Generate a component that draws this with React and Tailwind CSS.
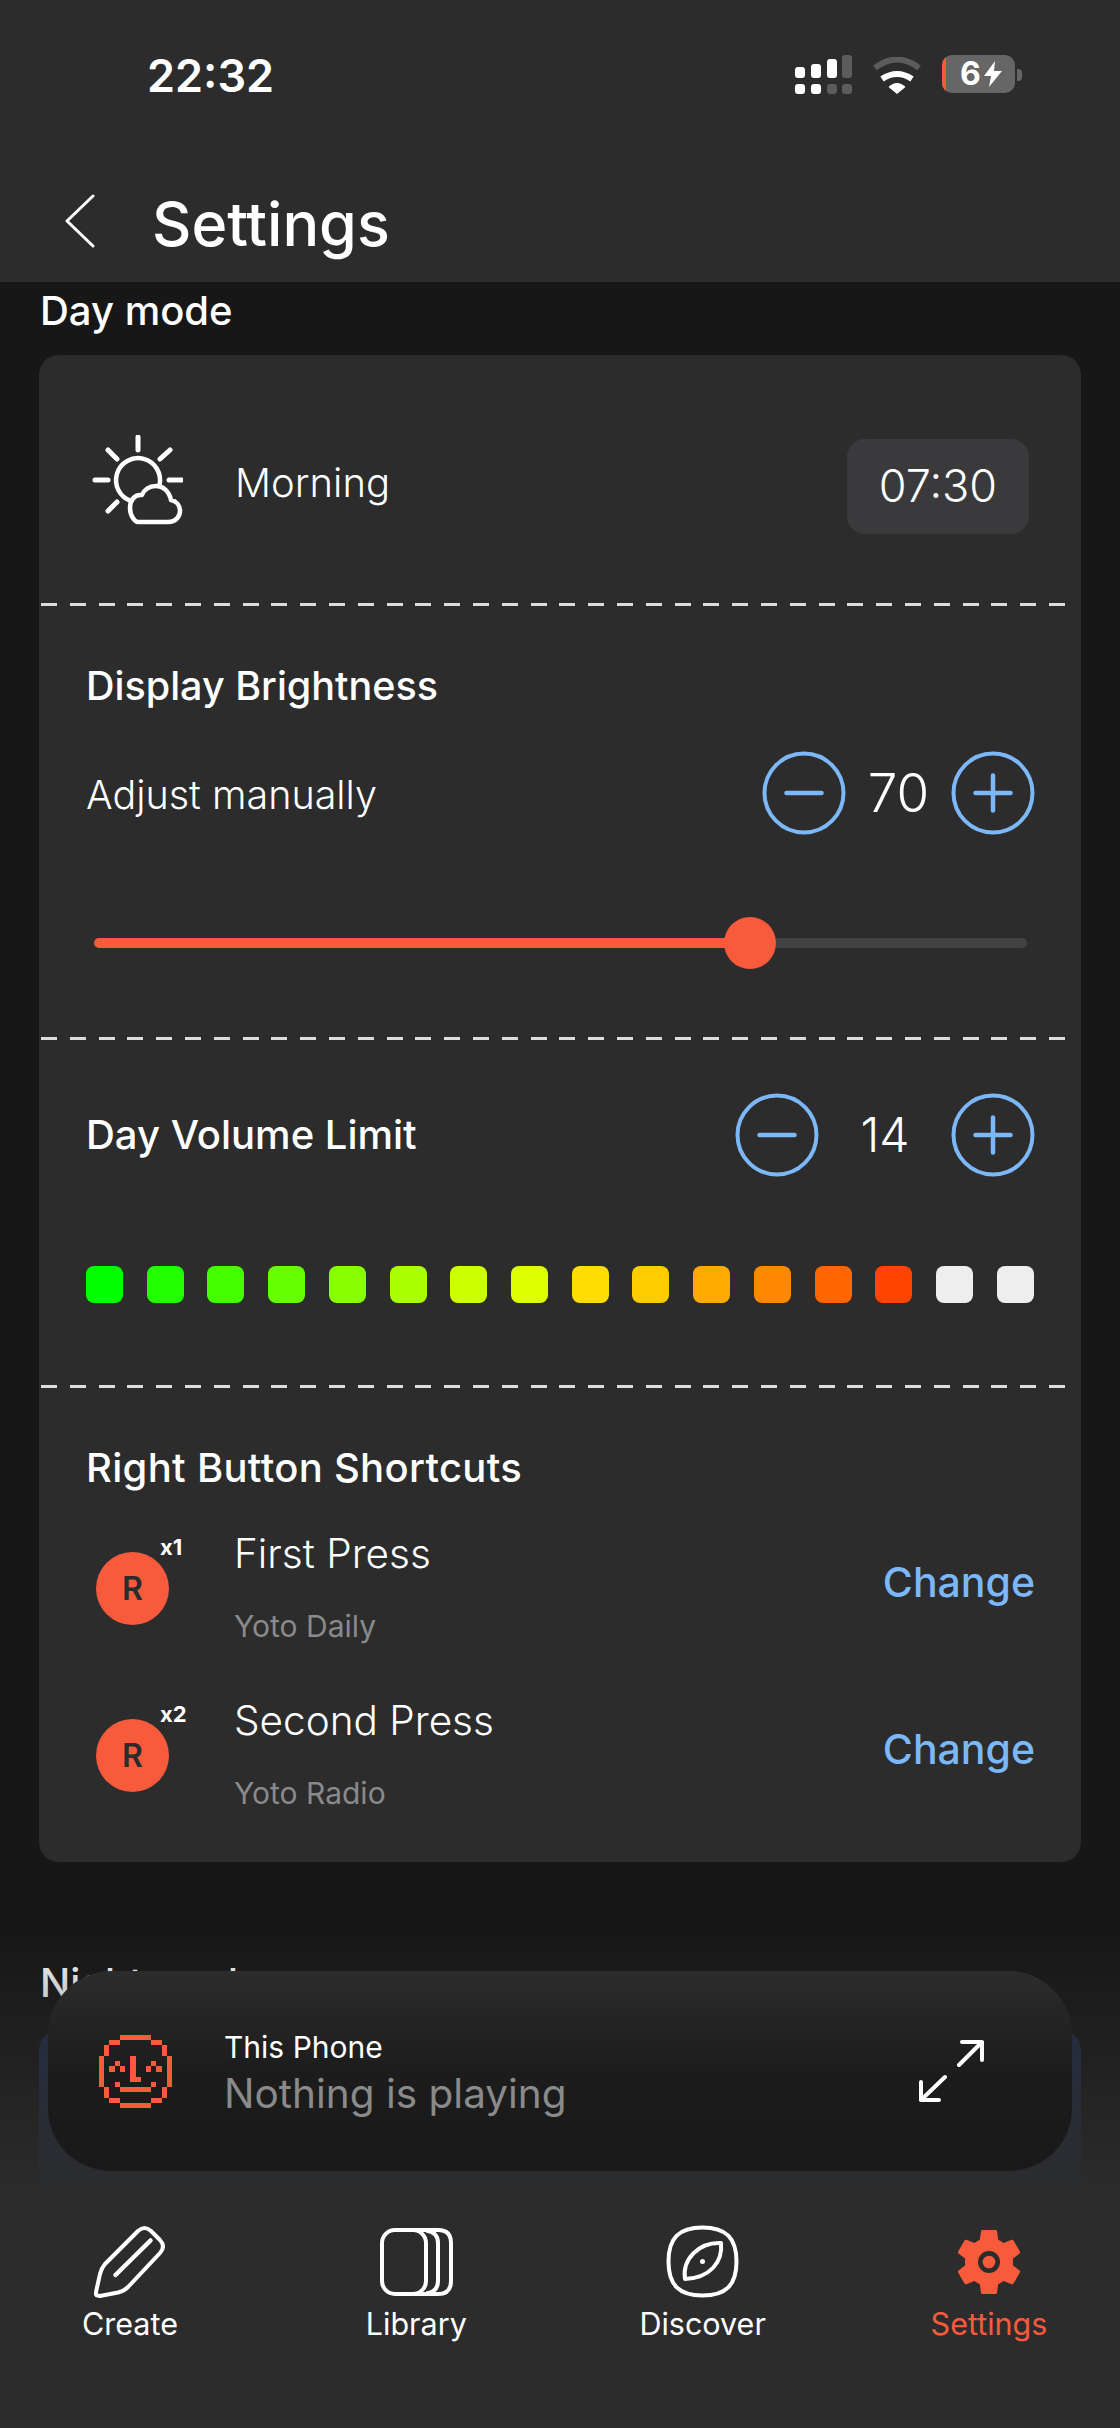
const SQUARES = ['#00ff00','#22ff00','#44ff00','#66ff00','#88ff00','#aaff00','#ccff00','#ddff00','#ffdd00','#ffcc00','#ffaa00','#ff8800','#ff6600','#ff4400','#eeeeee','#eeeeee'];

const FACE = [
  [0,4,6],[1,2,2],[1,10,2],[2,1,1],[3,1,1],[2,12,1],[3,12,1],
  [4,0,1],[5,0,1],[6,0,1],[7,0,1],[8,0,1],[9,0,1],
  [4,13,1],[5,13,1],[6,13,1],[7,13,1],[8,13,1],[9,13,1],
  [10,1,1],[11,1,1],[10,12,1],[11,12,1],[12,2,2],[12,10,2],[13,4,6],
  [5,3,1],[6,2,1],[6,4,1],[5,10,1],[6,9,1],[6,11,1],
  [4,6,1],[5,6,1],[6,6,1],[7,6,1],[8,6,2],
  [9,3,1],[9,10,1],[10,4,6],
];

function Dashes() {
  return <div className="h-[3px] ml-[2px] mr-[10px] bg-[repeating-linear-gradient(90deg,#dddddd_0,#dddddd_16px,transparent_16px,transparent_28.8px)]" />;
}

function RoundBtn({ plus }) {
  return (
    <svg width="84" height="84" viewBox="0 0 84 84" fill="none" stroke="#7cb8f7" strokeLinecap="round" className="shrink-0">
      <circle cx="42" cy="42" r="39.5" strokeWidth="4" />
      <path d="M24.5 42H59.5" strokeWidth="4.5" />
      {plus && <path d="M42 24.5V59.5" strokeWidth="4.5" />}
    </svg>
  );
}

function SunCloud() {
  return (
    <svg width="91" height="90" viewBox="0 0 91 90" fill="none" stroke="#fff" strokeWidth="4.5" strokeLinecap="round" strokeLinejoin="round" className="shrink-0">
      <path d="M46 2V15M3 45H16M77 45H90M16 15L25 24M78 15L68 24M16 76L25 67" strokeWidth="5" />
      <path d="M39 66A22 22 0 1 1 67.5 50" />
      <path d="M46 87H76C84 87 88 81 88 76C88 70 84 66 79 65C77 56 71 51 64 51C57 51 52 55 50 60C42 59 38 66 38 73C38 81 43 87 46 87Z" />
    </svg>
  );
}

function PressRow({ count, title, sub }) {
  return (
    <div className="flex h-[167px] pl-[57px] pr-[46px]">
      <div className="relative w-[73px] h-[73px] mt-[32px] rounded-full bg-[#f85a3c] flex items-center justify-center shrink-0">
        <span className="text-[32px] leading-none font-semibold text-[#2c2c2c]">R</span>
        <span className="absolute left-[64px] top-[-19px] text-[22px] leading-[28px] font-bold text-white">{count}</span>
      </div>
      <div className="ml-[65px] pt-[10px]">
        <div className="text-[40.5px] leading-[48px] font-light text-white">{title}</div>
        <div className="mt-[28px] text-[30px] leading-[40px] text-[#8a8a8a]">{sub}</div>
      </div>
      <div className="ml-auto mt-[38px] text-[41px] leading-[48px] font-medium text-[#7cb8f7]">Change</div>
    </div>
  );
}

function NavItem({ icon, label, active }) {
  return (
    <div className="w-[200px] flex flex-col items-center pt-[25px]">
      <div className="h-[73px] flex items-center justify-center">{icon}</div>
      <div className={"mt-[6px] text-[30.5px] leading-[40px] " + (active ? 'text-[#f85a3c]' : 'text-white')}>{label}</div>
    </div>
  );
}

export default function App() {
  return (
    <div className="relative w-[1120px] h-[2428px] overflow-hidden flex flex-col bg-[#171717] font-['Inter','Noto_Sans',sans-serif]">
      <header className="h-[282px] shrink-0 bg-[#2c2c2c] relative">
        <div className="flex items-start h-[186px]">
          <div className="ml-[147px] mt-[50px] text-[45px] leading-[52px] font-semibold text-white">22:32</div>
          <div className="ml-auto mr-[98px] mt-[55px] flex items-start">
            <svg width="57" height="40" viewBox="0 0 57 40" className="mt-0">
              <rect x="0" y="12" width="10" height="11" rx="3" fill="#fff" />
              <rect x="16" y="9" width="10" height="14" rx="3" fill="#fff" />
              <rect x="32" y="4" width="10" height="19" rx="3" fill="#fff" />
              <rect x="47" y="0" width="10" height="23" rx="3" fill="#5c5c5c" />
              <rect x="0" y="29" width="10" height="10" rx="3" fill="#fff" />
              <rect x="16" y="29" width="10" height="10" rx="3" fill="#fff" />
              <rect x="32" y="29" width="10" height="10" rx="3" fill="#5c5c5c" />
              <rect x="47" y="29" width="10" height="10" rx="3" fill="#5c5c5c" />
            </svg>
            <svg width="50" height="38" viewBox="0 0 50 38" fill="none" className="ml-[20px] mt-[2px]">
              <path d="M3 11Q25 -6 47 11" stroke="#5c5c5c" strokeWidth="6" />
              <path d="M10 22Q25 12 40 22" stroke="#fff" strokeWidth="6" />
              <path d="M16.5 30Q25 22 33.5 30L25 37Z" fill="#fff" />
            </svg>
            <div className="ml-[20px] w-[73px] h-[38px] rounded-[10px] bg-[#666666] overflow-hidden flex items-center">
              <div className="w-[4px] h-full bg-[#f85a3c] shrink-0" />
              <span className="ml-[14px] text-[32px] leading-none font-bold text-white">6</span>
              <svg width="18" height="26" viewBox="0 0 18 26" className="ml-[3px]"><path d="M11 0L0 15H7L5 26L18 10H10Z" fill="#fff" /></svg>
            </div>
            <div className="ml-[2px] mt-[14px] w-[5px] h-[12px] rounded-r-[4px] bg-[#666666]" />
          </div>
        </div>
        <div className="flex items-center h-[72px] mt-[-1px]">
          <svg width="30" height="54" viewBox="0 0 30 54" fill="none" stroke="#fff" strokeWidth="3" strokeLinecap="round" strokeLinejoin="round" className="ml-[65px]">
            <path d="M28 2L2 27L28 52" />
          </svg>
          <div className="ml-[57px] mt-[5px] text-[61px] leading-[72px] font-medium text-white">Settings</div>
        </div>
      </header>

      <main className="flex-1 relative overflow-hidden px-[39px] pt-[5px] min-h-0">
        <div className="text-[40px] leading-[48px] ml-[1px] font-medium text-white">Day mode</div>
        <div className="mt-[20px] rounded-[20px] bg-[#2c2c2c] h-[1507px]">
          <div className="h-[248px] pt-[2px] flex items-center pl-[53px] pr-[52px]">
            <SunCloud />
            <span className="ml-[52px] mt-[5px] text-[40px] leading-[48px] font-light text-white">Morning</span>
            <div className="ml-auto mt-[12px] w-[182px] h-[95px] rounded-[18px] bg-[#3a3a3c] flex items-center justify-center text-[45px] font-light text-white">07:30</div>
          </div>
          <Dashes />
          <div className="h-[431px] pt-[56px]">
            <div className="pl-[47px] text-[39.5px] leading-[48px] font-medium text-white">Display Brightness</div>
            <div className="mt-[41px] h-[84px] flex items-center pl-[47px] pr-[46px]">
              <span className="mt-[4px] text-[39.5px] leading-[48px] font-light text-white">Adjust manually</span>
              <div className="ml-auto"><RoundBtn /></div>
              <span className="w-[105px] text-center text-[53px] leading-none font-light text-white">70</span>
              <RoundBtn plus />
            </div>
            <div className="mt-[82px] h-[52px] flex items-center ml-[55px] mr-[54px]">
              <div className="w-[632px] h-[10px] -mr-[2px] rounded-l-full bg-[#f85a3c]" />
              <div className="w-[52px] h-[52px] rounded-full bg-[#f85a3c] shrink-0" />
              <div className="flex-1 h-[10px] rounded-r-full bg-[#424245]" />
            </div>
          </div>
          <Dashes />
          <div className="h-[345px] pt-[53px]">
            <div className="h-[84px] flex items-center pl-[47px] pr-[46px]">
              <span className="text-[40px] leading-[48px] font-medium text-white">Day Volume Limit</span>
              <div className="ml-auto"><RoundBtn /></div>
              <span className="w-[132px] text-center text-[48px] leading-none font-light text-white">14</span>
              <RoundBtn plus />
            </div>
            <div className="mt-[89px] flex justify-between pl-[47px] pr-[47px]">
              {SQUARES.map((c, i) => (
                <div key={i} className="w-[37px] h-[37px] rounded-[8px]" style={{ backgroundColor: c }} />
              ))}
            </div>
          </div>
          <Dashes />
          <div className="pt-[56px]">
            <div className="pl-[47px] text-[40px] leading-[48px] tracking-[0.3px] font-medium text-white">Right Button Shortcuts</div>
            <div className="mt-[28px]">
              <PressRow count="x1" title="First Press" sub="Yoto Daily" />
              <PressRow count="x2" title="Second Press" sub="Yoto Radio" />
            </div>
          </div>
        </div>
        <div className="mt-[97px] ml-[1px] text-[40px] leading-[48px] font-medium text-white">Night mode</div>
        <div className="mt-[23px] h-[300px] rounded-[20px] bg-[#1f2d4a]" />
        <div className="absolute left-0 right-0 bottom-0 h-[270px] bg-gradient-to-b from-[#17171700] to-[#2c2c2c]" />
      </main>

      <nav className="h-[228px] shrink-0 bg-[#2c2c2c] flex justify-between pl-[30px] pr-[31px]">
        <NavItem label="Create" icon={
          <svg width="72" height="73" viewBox="0 0 72 73" fill="none" stroke="#fff" strokeWidth="4" strokeLinecap="round" strokeLinejoin="round">
            <path d="M3.5 70.5C2 70.5 1.5 69 2 67L6 49Q7.5 43 11 39L44 6Q50.5 0 57 6L66 15Q72 21.5 66 28L34 62Q30 66 24 67.5L6 71Z" />
            <path d="M21.5 50L56.5 15.5" strokeWidth="4.5" />
          </svg>
        } />
        <NavItem label="Library" icon={
          <svg width="73" height="68" viewBox="0 0 73 68" fill="none" stroke="#fff" strokeWidth="4">
            <rect x="2" y="2" width="44" height="64" rx="13" />
            <path d="M34 2H58Q71 2 71 15V53Q71 66 58 66H34" />
            <path d="M46 2.5Q58 4 58 15V53Q58 64 46 65.5" />
          </svg>
        } />
        <NavItem label="Discover" icon={
          <svg width="73" height="73" viewBox="0 0 73 73" fill="none" stroke="#fff" strokeWidth="4" strokeLinejoin="round">
            <path d="M36.5 2.5C60 2.5 70.5 13 70.5 36.5C70.5 60 60 70.5 36.5 70.5C13 70.5 2.5 60 2.5 36.5C2.5 13 13 2.5 36.5 2.5Z" />
            <path d="M55 18C57 37 44 53 19 54C16 34 33 17 55 18Z" />
            <circle cx="36.5" cy="36.5" r="2.5" fill="#fff" stroke="none" />
          </svg>
        } />
        <NavItem label="Settings" active icon={
          <svg width="80" height="80" viewBox="0 0 24 24">
            <path fill="#f85a3c" d="M19.14 12.94c.04-.3.06-.61.06-.94 0-.32-.02-.64-.07-.94l2.03-1.58c.18-.14.23-.41.12-.61l-1.92-3.32c-.12-.22-.37-.29-.59-.22l-2.39.96c-.5-.38-1.03-.7-1.62-.94l-.36-2.54c-.04-.24-.24-.41-.48-.41h-3.84c-.24 0-.43.17-.47.41l-.36 2.54c-.59.24-1.13.57-1.62.94l-2.39-.96c-.22-.08-.47 0-.59.22L2.74 8.87c-.12.21-.08.47.12.61l2.03 1.58c-.05.3-.09.63-.09.94s.02.64.07.94l-2.03 1.58c-.18.14-.23.41-.12.61l1.92 3.32c.12.22.37.29.59.22l2.39-.96c.5.38 1.03.7 1.62.94l.36 2.54c.05.24.24.41.48.41h3.84c.24 0 .44-.17.47-.41l.36-2.54c.59-.24 1.13-.56 1.62-.94l2.39.96c.22.08.47 0 .59-.22l1.92-3.32c.12-.22.07-.47-.12-.61l-2.01-1.58z" />
            <circle cx="12" cy="12" r="2.6" fill="#f85a3c" stroke="#2c2c2c" strokeWidth="1.4" />
          </svg>
        } />
      </nav>

      <div className="absolute left-[48px] top-[1971px] w-[1024px] h-[202px] rounded-[64px] bg-gradient-to-b from-[#2c2c2c] via-[#1c1c1c] to-[#191919] border-b-2 border-[#2c2c2c] flex items-center pl-[51px] pr-[88px]">
        <svg width="73" height="73" viewBox="0 0 14 14" fill="#f85a3c" shapeRendering="crispEdges" className="shrink-0">
          {FACE.map(([r, c, w], i) => <rect key={i} x={c} y={r} width={w} height="1" />)}
        </svg>
        <div className="ml-[52px] mt-[5px]">
          <div className="text-[30px] leading-[36px] text-white">This Phone</div>
          <div className="mt-[5px] text-[40.5px] leading-[48px] text-[#8a8a8a]">Nothing is playing</div>
        </div>
        <svg width="66" height="64" viewBox="0 0 66 64" fill="none" stroke="#fff" strokeWidth="4" strokeLinecap="round" strokeLinejoin="round" className="ml-auto">
          <path d="M41 26L64 3M44 3H64V21M27 38L3 61M3 43V61H21" />
        </svg>
      </div>
    </div>
  );
}
